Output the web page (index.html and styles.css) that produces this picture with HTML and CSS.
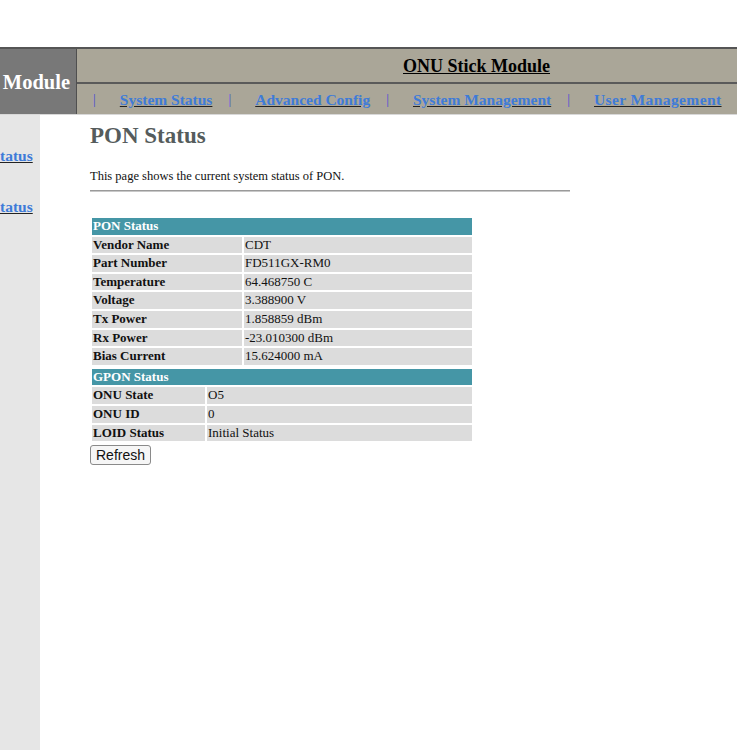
FILE: index.html
```html
<!DOCTYPE html>
<html>
<head>
<meta charset="utf-8">
<title>PON Status</title>
<link rel="stylesheet" href="styles.css">
</head>
<body>
<div class="top-space"></div>
<div class="header">
  <div class="brand">Module</div>
  <div class="header-right">
    <div class="title-row"><a class="title-link" href="#">ONU Stick Module</a></div>
    <div class="nav-row">
      <span class="sep">|</span><a class="nav-link" href="#">System Status</a>
      <span class="sep">|</span><a class="nav-link" href="#">Advanced Config</a>
      <span class="sep">|</span><a class="nav-link" href="#">System Management</a>
      <span class="sep">|</span><a class="nav-link wide" href="#">User Management</a>
    </div>
  </div>
</div>
<div class="page">
  <div class="sidebar">
    <a class="side-link" href="#">tatus</a>
    <a class="side-link" href="#">tatus</a>
  </div>
  <div class="main">
    <h1 class="page-title">PON Status</h1>
    <p class="desc">This page shows the current system status of PON.</p>
    <hr class="rule">
    <table class="status-table pon">
      <tr><td class="head" colspan="2">PON Status</td></tr>
      <tr><td class="key">Vendor Name</td><td class="val">CDT</td></tr>
      <tr><td class="key">Part Number</td><td class="val">FD511GX-RM0</td></tr>
      <tr><td class="key">Temperature</td><td class="val">64.468750 C</td></tr>
      <tr><td class="key">Voltage</td><td class="val">3.388900 V</td></tr>
      <tr><td class="key">Tx Power</td><td class="val">1.858859 dBm</td></tr>
      <tr><td class="key">Rx Power</td><td class="val">-23.010300 dBm</td></tr>
      <tr><td class="key">Bias Current</td><td class="val">15.624000 mA</td></tr>
    </table>
    <table class="status-table gpon">
      <tr><td class="head" colspan="2">GPON Status</td></tr>
      <tr><td class="key">ONU State</td><td class="val">O5</td></tr>
      <tr><td class="key">ONU ID</td><td class="val">0</td></tr>
      <tr><td class="key">LOID Status</td><td class="val">Initial Status</td></tr>
    </table>
    <div class="actions"><button class="btn" type="button">Refresh</button></div>
  </div>
</div>
</body>
</html>
```

FILE: styles.css
```css
html, body {
  margin: 0;
  padding: 0;
  background: #ffffff;
  font-family: "Liberation Serif", "Times New Roman", serif;
  color: #111;
}

.top-space {
  height: 47px;
}

.header {
  display: flex;
  height: 65px;
  border-top: 2px solid #555555;
  border-bottom: 1px solid #d8d8d8;
}

.brand {
  width: 77px;
  flex-shrink: 0;
  background: #787878;
  color: #ffffff;
  font-weight: bold;
  font-size: 20.5px;
  display: flex;
  align-items: center;
  justify-content: flex-end;
  padding-right: 6px;
  box-sizing: border-box;
  padding-top: 1px;
  border-right: 1px solid #4f4f4f;
}

.header-right {
  flex: 1;
  min-width: 0;
  display: flex;
  flex-direction: column;
  background: #aaa698;
}

.title-row {
  height: 35px;
  flex-shrink: 0;
  border-bottom: 2px solid #5a5a5a;
  display: flex;
  align-items: center;
  padding-left: 326px;
  box-sizing: border-box;
  padding-top: 1px;
}

.title-link {
  color: #000000;
  font-weight: bold;
  font-size: 18px;
  white-space: nowrap;
}

.nav-row {
  flex: 1;
  display: flex;
  align-items: center;
  padding-left: 16px;
  padding-top: 1px;
  font-size: 15.5px;
  white-space: nowrap;
  overflow: hidden;
}

.sep {
  flex-shrink: 0;
  color: #4b4bd8;
  font-size: 14px;
  margin-right: 24px;
}

.nav-link {
  flex-shrink: 0;
  color: #3e7bd8;
  font-weight: bold;
  text-decoration-color: #222222;
  margin-right: 16px;
}

.nav-link.wide {
  letter-spacing: 0.4px;
}

.page {
  display: flex;
  min-height: 635px;
}

.sidebar {
  width: 40px;
  flex-shrink: 0;
  background: #e6e6e6;
  display: flex;
  flex-direction: column;
  align-items: flex-start;
  padding-top: 32px;
  box-sizing: border-box;
}

.side-link {
  color: #3e7bd8;
  font-weight: bold;
  font-size: 15.5px;
  line-height: 18px;
  text-decoration-color: #222222;
  margin-bottom: 33px;
}

.main {
  flex: 1;
  padding-left: 50px;
  padding-top: 8px;
}

.page-title {
  margin: 0;
  font-size: 23px;
  line-height: 26px;
  color: #555c5c;
}

.desc {
  margin: 20px 0 0 0;
  font-size: 12.5px;
  line-height: 14px;
}

.rule {
  width: 480px;
  margin: 7px 0 0 0;
  border: 0;
  border-top: 1px solid #9a9a9a;
  border-bottom: 1px solid #c8c8c8;
  height: 0;
}

.status-table {
  width: 384px;
  border-spacing: 2px;
  font-size: 13px;
}

.status-table.pon {
  margin-top: 24px;
}

.status-table td {
  padding: 0 1px;
  line-height: 16.6px;
  background: #dcdcdc;
  vertical-align: middle;
  white-space: nowrap;
}

.status-table td.head {
  background: #4596a6;
  color: #ffffff;
  font-weight: bold;
}

.status-table td.key {
  font-weight: bold;
}

.pon td.key {
  width: 148px;
}

.gpon td.key {
  width: 111px;
}

.actions {
  margin-top: 2px;
}

.btn {
  font-family: "Liberation Sans", Arial, sans-serif;
  font-size: 14px;
  height: 20px;
  padding: 0 5px;
  border: 1px solid #8a8a8a;
  border-radius: 3px;
  background: #f6f6f6;
  color: #111;
}
```
